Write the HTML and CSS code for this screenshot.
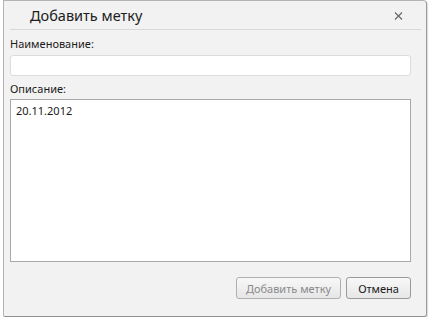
FILE: index.html
```html
<!DOCTYPE html>
<html lang="ru">
<head>
    <meta charset="UTF-8">
    <meta name="viewport" content="width=device-width, initial-scale=1.0">
    <title>Добавить метку</title>
    <link rel="stylesheet" href="styles.css">
</head>
<body>
    <div class="dialog">
        <div class="dialog-header">
            <span class="dialog-title">Добавить метку</span>
            <svg class="dialog-close" width="9" height="8" viewBox="0 0 9 8">
                <path d="M1 0.5 L8 7.5 M8 0.5 L1 7.5" stroke="#666" stroke-width="1.1" fill="none"/>
            </svg>
        </div>
        <form class="dialog-body">
            <div class="field">
                <label for="name">Наименование:</label>
                <input type="text" id="name" name="name">
            </div>
            <div class="field">
                <label for="descr">Описание:</label>
                <textarea id="descr" name="descr">20.11.2012</textarea>
            </div>
            <div class="buttons">
                <button type="submit" disabled>Добавить метку</button>
                <button type="button" class="btn-cancel">Отмена</button>
            </div>
        </form>
    </div>
</body>
</html>
```

FILE: styles.css
```css
body {
    margin: 0;
    background: #ffffff;
    font-family: "Noto Sans", "Open Sans", sans-serif;
    font-size: 11px;
    color: #1a1a1a;
}
.dialog {
    margin-left: 3px;
    width: 422px;
    height: 315px;
    background: #f2f2f2;
    border: 1px solid #b4b4b8;
    border-right-color: #9c9ca2;
    border-bottom-color: #8e8e94;
    border-radius: 0 4px 3px 2px;
    box-shadow: 1px 1px 1px rgba(0, 0, 0, 0.15);
}
.dialog-header {
    display: flex;
    align-items: center;
    justify-content: space-between;
    height: 28px;
    margin: 0 5px 0 6px;
    padding: 0 18px 0 20px;
    border-bottom: 1px solid #d8d8d8;
}
.dialog-title {
    font-size: 14.5px;
    color: #202020;
}
.dialog-close {
    display: block;
    margin-top: 2px;
}
.dialog-body {
    padding: 5px 15px 0 6px;
}
.field label {
    display: block;
    height: 17px;
    line-height: 17px;
}
.field input {
    display: block;
    box-sizing: border-box;
    width: 100%;
    height: 21px;
    margin: 3px 0 4px;
    border: 1px solid #dcdcdc;
    border-radius: 3px;
    background: #fff;
}
.field textarea {
    display: block;
    box-sizing: border-box;
    width: 401px;
    height: 163px;
    margin-top: 2px;
    padding: 3px 5px;
    border: 1px solid #a8a8ae;
    border-radius: 0;
    background: #fff;
    font-family: inherit;
    font-size: 11px;
    color: #1a1a1a;
    resize: none;
}
.buttons {
    display: flex;
    justify-content: flex-end;
    gap: 5px;
    margin-top: 15px;
}
.buttons button {
    height: 22px;
    padding: 0 9px;
    border: 1px solid #9a9a9a;
    border-radius: 3px;
    background: linear-gradient(#f8f8f8, #e6e6e6);
    font-family: inherit;
    font-size: 11px;
    color: #1a1a1a;
}
.buttons .btn-cancel {
    padding: 0 11px;
}
.buttons button:disabled {
    color: #8a8a8a;
    border-color: #b0b0b0;
}
```
